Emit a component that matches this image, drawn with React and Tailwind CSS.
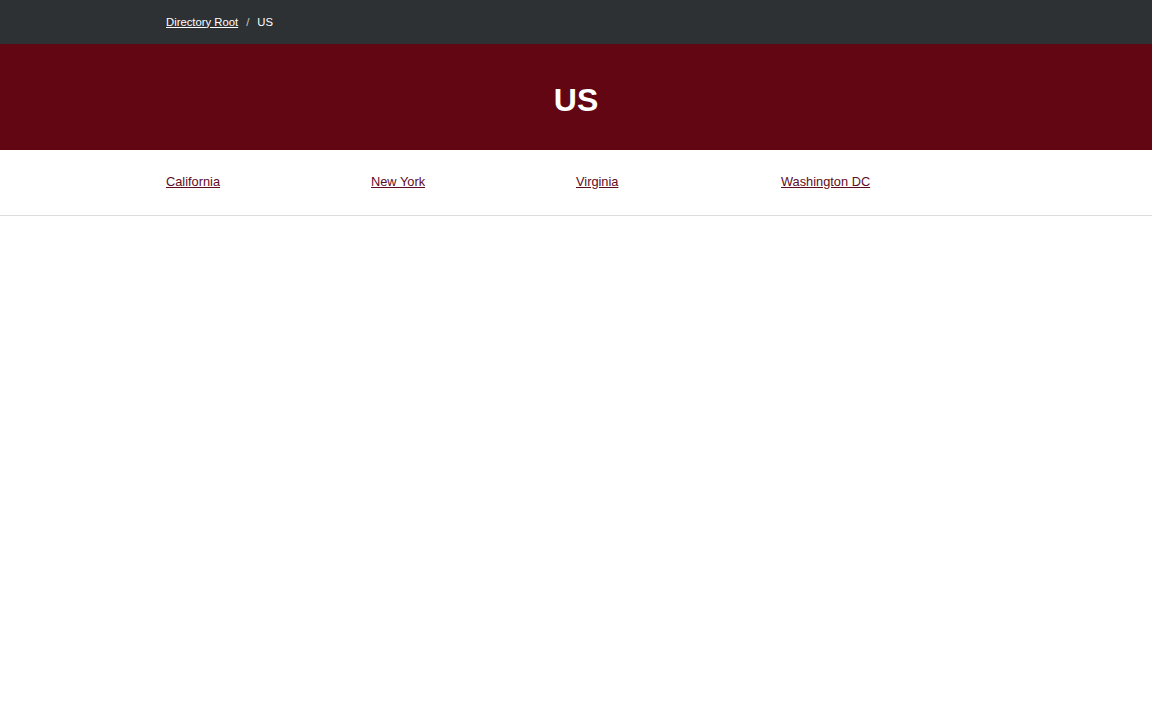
import React from 'react';

const states = ['California', 'New York', 'Virginia', 'Washington DC'];

const App = () => {
  return (
    <div className="min-h-screen bg-white font-['Liberation_Sans',Arial,sans-serif]">
      {/* Breadcrumb bar */}
      <div className="h-[44px] bg-[#2e3134]">
        <div className="mx-auto flex h-full w-[820px] items-center gap-[8px] text-[11.3px] text-white">
          <a href="#" className="underline">Directory Root</a>
          <span className="text-[#ccc]">/</span>
          <span>US</span>
        </div>
      </div>

      {/* Title band */}
      <div className="flex h-[106px] items-center justify-center bg-[#630613] pt-[6px]">
        <h1 className="text-[32px] font-bold text-white">US</h1>
      </div>

      {/* State links */}
      <div className="border-b border-[#dcdcdc]">
        <div className="mx-auto grid h-[65px] w-[820px] grid-cols-4 items-center pb-[4px]">
          {states.map((name) => (
            <div key={name}>
              <a href="#" className="text-[12.8px] text-[#5e0b1f] underline">{name}</a>
            </div>
          ))}
        </div>
      </div>
    </div>
  );
};

export default App;
